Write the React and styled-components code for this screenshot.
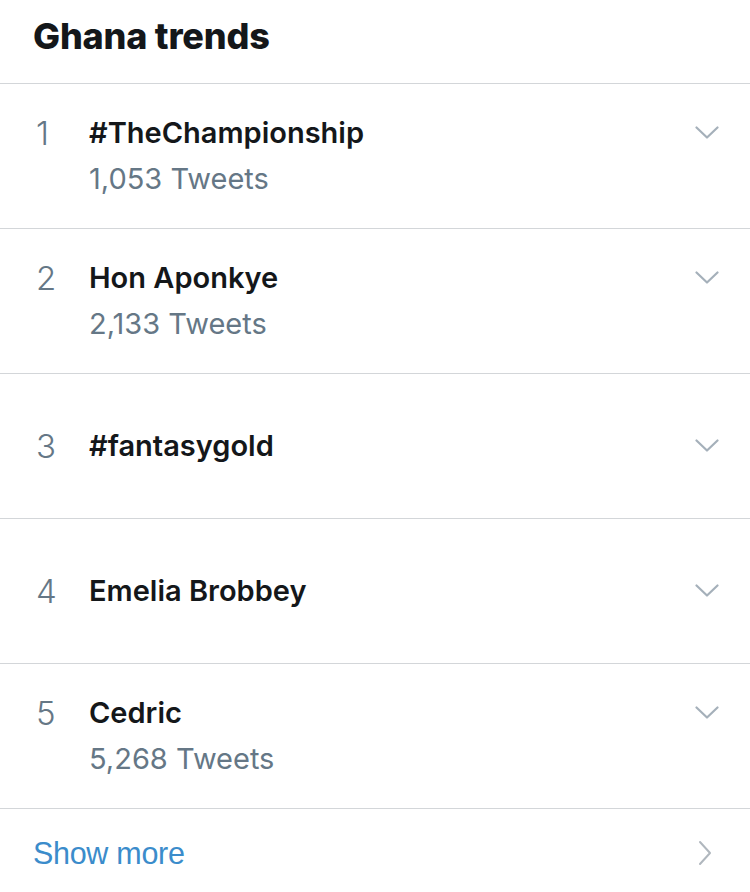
import React from 'react';
import styled, { createGlobalStyle } from 'styled-components';

const GlobalStyle = createGlobalStyle`
  body {
    margin: 0;
    background: #ffffff;
    font-family: Inter, "Liberation Sans", sans-serif;
  }
`;

const Panel = styled.div`
  width: 750px;
  background: #fff;
`;

const Header = styled.div`
  height: 84px;
  box-sizing: border-box;
  padding: 14px 0 0 33px;
  border-bottom: 1px solid #d3d6d9;
`;

const Title = styled.h1`
  margin: 0;
  font-size: 36px;
  line-height: 44px;
  font-weight: 800;
  color: #14171a;
  letter-spacing: -0.2px;
`;

const Row = styled.div`
  height: 145px;
  box-sizing: border-box;
  border-bottom: 1px solid #d3d6d9;
  display: flex;
  align-items: center;
`;

const Line = styled.div`
  display: flex;
  align-items: flex-start;
  width: 100%;
  padding: 0 31px 0 33px;
  box-sizing: border-box;
`;

const Rank = styled.div`
  width: 56px;
  font-size: 33px;
  font-weight: 300;
  color: #657786;
  line-height: 40px;
  padding-left: 3px;
  box-sizing: border-box;
`;

const Body = styled.div`
  flex: 1;
  display: flex;
  flex-direction: column;
  gap: 6px;
`;

const Name = styled.div`
  font-size: 29px;
  font-weight: 600;
  color: #14171a;
  line-height: 40px;
`;

const Count = styled.div`
  font-size: 29px;
  font-weight: 400;
  color: #657786;
  line-height: 40px;
`;

const Chevron = styled.svg`
  width: 24px;
  height: 40px;
  flex: none;
  color: #a5b0ba;
`;

const More = styled.div`
  height: 84px;
  display: flex;
  align-items: center;
  justify-content: space-between;
  padding: 4px 38px 0 33px;
  box-sizing: border-box;
`;

const MoreText = styled.span`
  font-family: "Liberation Sans", Arial, sans-serif;
  font-size: 30.5px;
  color: #3b8ccb;
  letter-spacing: -0.3px;
`;

const DownIcon = () => (
  <Chevron viewBox="0 0 24 40">
    <path d="M1.5 14.5 L12 24.5 L22.5 14.5" fill="none" stroke="currentColor" strokeWidth="2.2" strokeLinecap="round" strokeLinejoin="round" />
  </Chevron>
);

const RightIcon = styled.svg`
  width: 14px;
  height: 26px;
  color: #b0b7be;
`;

const trends = [
  { rank: 1, name: '#TheChampionship', count: '1,053 Tweets' },
  { rank: 2, name: 'Hon Aponkye', count: '2,133 Tweets' },
  { rank: 3, name: '#fantasygold' },
  { rank: 4, name: 'Emelia Brobbey' },
  { rank: 5, name: 'Cedric', count: '5,268 Tweets' },
];

export default function App() {
  return (
    <Panel>
      <GlobalStyle />
      <Header>
        <Title>Ghana trends</Title>
      </Header>
      {trends.map((t) => (
        <Row key={t.rank}>
          <Line>
            <Rank>{t.rank}</Rank>
            <Body>
              <Name>{t.name}</Name>
              {t.count && <Count>{t.count}</Count>}
            </Body>
            <DownIcon />
          </Line>
        </Row>
      ))}
      <More>
        <MoreText>Show more</MoreText>
        <RightIcon viewBox="0 0 14 26">
          <path d="M2 2 L12 13 L2 24" fill="none" stroke="currentColor" strokeWidth="2" strokeLinecap="round" strokeLinejoin="round" />
        </RightIcon>
      </More>
    </Panel>
  );
}
